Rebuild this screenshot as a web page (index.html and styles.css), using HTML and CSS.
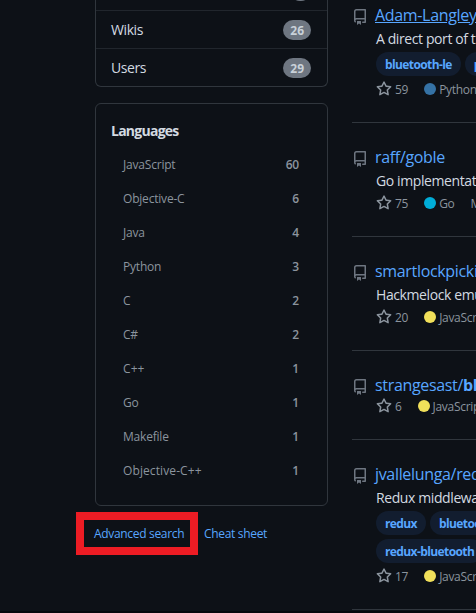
FILE: index.html
```
<!DOCTYPE html>
<html lang="en">
<head>
<meta charset="utf-8">
<title>Search results</title>
<link rel="stylesheet" href="styles.css">
</head>
<body>
<svg class="defs" aria-hidden="true">
  <symbol id="repo" viewBox="0 0 16 16"><path fill-rule="evenodd" d="M2 2.5A2.5 2.5 0 014.5 0h8.75a.75.75 0 01.75.75v12.5a.75.75 0 01-.75.75h-2.5a.75.75 0 110-1.5h1.75v-2h-8a1 1 0 00-.714 1.7.75.75 0 01-1.072 1.05A2.495 2.495 0 012 11.5v-9zm10.5-1V9h-8c-.356 0-.694.074-1 .208V2.5a1 1 0 011-1h8zM5 12.25v3.25a.25.25 0 00.4.2l1.45-1.087a.25.25 0 01.3 0L8.6 15.7a.25.25 0 00.4-.2v-3.25a.25.25 0 00-.25-.25h-3.5a.25.25 0 00-.25.25z"/></symbol>
  <symbol id="star" viewBox="0 0 16 16"><path fill-rule="evenodd" d="M8 .25a.75.75 0 01.673.418l1.882 3.815 4.21.612a.75.75 0 01.416 1.279l-3.046 2.97.719 4.192a.75.75 0 01-1.088.791L8 12.347l-3.766 1.98a.75.75 0 01-1.088-.79l.72-4.194L.818 6.374a.75.75 0 01.416-1.28l4.21-.611L7.327.668A.75.75 0 018 .25zm0 2.445L6.615 5.5a.75.75 0 01-.564.41l-3.097.45 2.24 2.184a.75.75 0 01.216.664l-.528 3.084 2.769-1.456a.75.75 0 01.698 0l2.77 1.456-.53-3.084a.75.75 0 01.216-.664l2.24-2.183-3.096-.45a.75.75 0 01-.564-.41L8 2.694v.001z"/></symbol>
</svg>
<div class="page">
  <aside class="sidebar">
    <nav class="menu">
      <a class="menu-item menu-item-cut"><span></span><span class="counter">2</span></a>
      <a class="menu-item"><span>Wikis</span><span class="counter">26</span></a>
      <a class="menu-item"><span>Users</span><span class="counter">29</span></a>
    </nav>
    <section class="languages">
      <h2>Languages</h2>
      <ul>
        <li><span>JavaScript</span><b>60</b></li>
        <li><span>Objective-C</span><b>6</b></li>
        <li><span>Java</span><b>4</b></li>
        <li><span>Python</span><b>3</b></li>
        <li><span>C</span><b>2</b></li>
        <li><span>C#</span><b>2</b></li>
        <li><span class="wide">C++</span><b>1</b></li>
        <li><span>Go</span><b>1</b></li>
        <li><span>Makefile</span><b>1</b></li>
        <li><span class="wide">Objective-C++</span><b>1</b></li>
      </ul>
    </section>
    <div class="help">
      <a class="highlight">Advanced search</a>
      <a>Cheat sheet</a>
    </div>
  </aside>
  <main class="results">
    <article class="repo">
      <svg class="icon"><use href="#repo"/></svg>
      <div class="body">
        <a class="title hovered">Adam-Langley/pybleno</a>
        <p class="desc">A direct port of the Bleno library</p>
        <div class="topics"><span class="topic">bluetooth-le</span><span class="topic">python</span></div>
        <div class="meta"><svg class="star"><use href="#star"/></svg><span class="count">59</span><i class="dot python"></i><span>Python</span></div>
      </div>
    </article>
    <article class="repo">
      <svg class="icon"><use href="#repo"/></svg>
      <div class="body">
        <a class="title">raff/goble</a>
        <p class="desc">Go implementation</p>
        <div class="meta"><svg class="star"><use href="#star"/></svg><span class="count">75</span><i class="dot go"></i><span>Go</span><span class="license">MIT</span></div>
      </div>
    </article>
    <article class="repo">
      <svg class="icon"><use href="#repo"/></svg>
      <div class="body">
        <a class="title">smartlockpicking</a>
        <p class="desc">Hackmelock emulator</p>
        <div class="meta"><svg class="star"><use href="#star"/></svg><span class="count">20</span><i class="dot js"></i><span>JavaScript</span></div>
      </div>
    </article>
    <article class="repo">
      <svg class="icon"><use href="#repo"/></svg>
      <div class="body">
        <a class="title">strangesast/<b>bleno</b></a>
        <div class="meta"><svg class="star"><use href="#star"/></svg><span class="count">6</span><i class="dot js"></i><span>JavaScript</span></div>
      </div>
    </article>
    <article class="repo">
      <svg class="icon"><use href="#repo"/></svg>
      <div class="body">
        <a class="title">jvallelunga/redux</a>
        <p class="desc">Redux middleware</p>
        <div class="topics"><span class="topic">redux</span><span class="topic">bluetooth</span></div>
        <div class="topics"><span class="topic">redux-bluetooth</span></div>
        <div class="meta"><svg class="star"><use href="#star"/></svg><span class="count">17</span><i class="dot js"></i><span>JavaScript</span></div>
      </div>
    </article>
  </main>
</div>
</body>
</html>
```
FILE: styles.css
```
* { box-sizing: border-box; }
html, body { margin: 0; height: 613px; overflow: hidden; }
body {
  background: #0d1117;
  color: #d3dae1;
  font: 14px/21px "Open Sans", "Noto Sans", sans-serif;
  letter-spacing: -0.4px;
  white-space: nowrap;
}
.defs { display: none; }
svg { fill: #8b949e; flex: none; }
.page { display: flex; height: 613px; overflow: hidden; border-bottom: 2px solid #06070d; }
.sidebar { width: 233px; margin-left: 95px; flex: none; }
.menu {
  border: 1px solid #30363d;
  border-top: 0;
  border-radius: 0 0 6px 6px;
  overflow: hidden;
}
.menu-item {
  display: flex;
  align-items: center;
  justify-content: space-between;
  height: 38px;
  padding: 0 16px 0 15px;
  border-top: 1px solid #21262d;
}
.menu-item-cut { height: 10px; border: 0; align-items: flex-end; padding-bottom: 9px; }
.counter {
  height: 20px;
  min-width: 20px;
  padding: 0 7px;
  border-radius: 10px;
  background: #6e7681;
  color: #c9d1d9;
  font-size: 12px;
  font-weight: 700;
  line-height: 21px;
  letter-spacing: 0;
}
.languages {
  height: 403px;
  margin-top: 16px;
  padding: 17px 16px 0 15px;
  border: 1px solid #30363d;
  border-radius: 6px;
}
h2 { margin: 0 0 6px; font-size: 14px; line-height: 20px; height: 21px; font-weight: 700; letter-spacing: -0.75px; }
ul { list-style: none; margin: 0; padding: 0; }
li {
  display: flex;
  justify-content: space-between;
  height: 34px;
  padding: 0 12px;
  color: #8b949e;
  font-size: 12px;
  line-height: 34px;
  letter-spacing: -0.2px;
}
li b { font-weight: 600; }
.wide { letter-spacing: 0.1px; }
.help {
  display: flex;
  width: 260px;
  margin: 6px 0 0 -19px;
  color: #58a6ff;
  font-size: 12px;
  line-height: 27px;
  letter-spacing: -0.32px;
}
.help a { padding-top: 8px; }
.help .highlight {
  width: 122px;
  height: 43px;
  margin-right: 6px;
  padding: 0 0 0 10px;
  border: 8px solid #ed1c24;
}
.results { width: 400px; margin-left: 24px; flex: none; }
.repo { display: flex; gap: 8px; padding: 24px 0; border-bottom: 1px solid #30363d; }
.repo:first-child { padding-top: 5px; }
.icon { width: 16px; height: 16px; margin-top: 4px; fill: #6e7681; }
.title { display: block; height: 22px; margin-left: -1px; color: #58a6ff; font-size: 16px; line-height: 21px; letter-spacing: -0.33px; }
.hovered { text-decoration: underline; }
.title b { font-weight: 700; }
.desc { margin: 0 0 4px; height: 21px; line-height: 23px; }
.topics { display: flex; gap: 4px; height: 28px; }
.topic {
  height: 24px;
  padding: 0 9px;
  border-radius: 12px;
  background: #121d2f;
  color: #58a6ff;
  font-size: 12px;
  font-weight: 700;
  line-height: 25px;
  letter-spacing: -0.6px;
}
.meta {
  display: flex;
  align-items: center;
  height: 18px;
  color: #8b949e;
  font-size: 12px;
  line-height: 18px;
  letter-spacing: -0.3px;
}
.meta span { padding-top: 1px; }
.star { width: 16px; height: 16px; margin-right: 3px; }
.count { margin-right: 16px; }
.dot { width: 12px; height: 12px; margin-right: 3px; border-radius: 50%; }
.python { background: #3572a5; }
.go { background: #00add8; }
.js { background: #f1e05a; }
.license { margin-left: 16px; }
```
